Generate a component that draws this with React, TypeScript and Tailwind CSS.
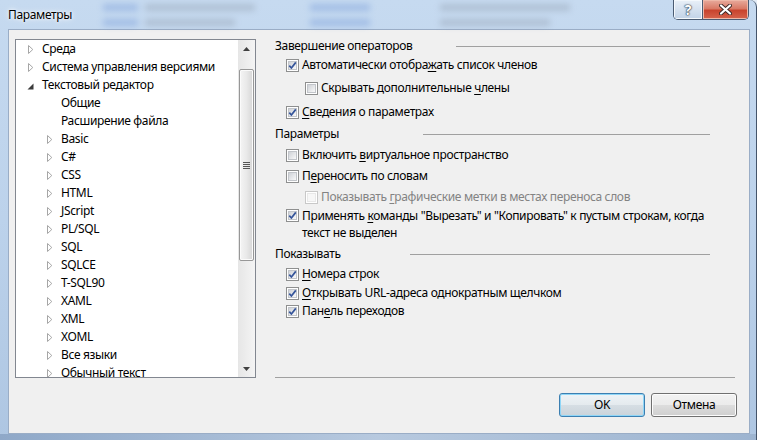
import React from 'react';

type Node = { label: string; level: 0 | 1; arrow?: 'closed' | 'open' };

const tree: Node[] = [
  { label: 'Среда', level: 0, arrow: 'closed' },
  { label: 'Система управления версиями', level: 0, arrow: 'closed' },
  { label: 'Текстовый редактор', level: 0, arrow: 'open' },
  { label: 'Общие', level: 1 },
  { label: 'Расширение файла', level: 1 },
  { label: 'Basic', level: 1, arrow: 'closed' },
  { label: 'C#', level: 1, arrow: 'closed' },
  { label: 'CSS', level: 1, arrow: 'closed' },
  { label: 'HTML', level: 1, arrow: 'closed' },
  { label: 'JScript', level: 1, arrow: 'closed' },
  { label: 'PL/SQL', level: 1, arrow: 'closed' },
  { label: 'SQL', level: 1, arrow: 'closed' },
  { label: 'SQLCE', level: 1, arrow: 'closed' },
  { label: 'T-SQL90', level: 1, arrow: 'closed' },
  { label: 'XAML', level: 1, arrow: 'closed' },
  { label: 'XML', level: 1, arrow: 'closed' },
  { label: 'XOML', level: 1, arrow: 'closed' },
  { label: 'Все языки', level: 1, arrow: 'closed' },
  { label: 'Обычный текст', level: 1, arrow: 'closed' },
];

function Arrow({ kind }: { kind?: 'closed' | 'open' }) {
  if (kind === 'closed') {
    return (
      <svg width="6" height="9" viewBox="0 0 6 9" className="ml-[1px]">
        <path d="M0.5 0.5 L4.8 4.5 L0.5 8.5 Z" fill="#fff" stroke="#a6a6a6" />
      </svg>
    );
  }
  if (kind === 'open') {
    return (
      <svg width="7" height="7" viewBox="0 0 7 7" className="mt-[2px]">
        <path d="M6.5 0.5 V6.5 H0.5 Z" fill="#3b3b3b" />
      </svg>
    );
  }
  return null;
}

function TreeRow({ node }: { node: Node }) {
  return (
    <div className={`flex h-[18px] shrink-0 items-center whitespace-nowrap ${node.level === 0 ? 'pl-[11px]' : 'pl-[30px]'}`}>
      <span className="flex w-[15px] items-center">
        <Arrow kind={node.arrow} />
      </span>
      <span>{node.label}</span>
    </div>
  );
}

function ScrollBar() {
  return (
    <div className="flex w-[17px] shrink-0 flex-col bg-linear-to-r from-[#e6e6e6] to-[#f4f4f4]">
      <div className="flex h-[17px] items-center justify-center">
        <svg width="7" height="4" viewBox="0 0 7 4">
          <path d="M3.5 0 L7 4 H0 Z" fill="#404040" />
        </svg>
      </div>
      <div className="mt-[12px] flex h-[192px] w-[15px] items-center justify-center self-center rounded-[2px] border border-[#979797] bg-linear-to-r from-[#f5f5f5] via-[#e9e9e9] to-[#d6d6d6] shadow-[inset_0_0_0_1px_#fbfbfb]">
        <div className="flex flex-col gap-[1px]">
          <div className="h-px w-[7px] bg-[#555]" />
          <div className="h-px w-[7px] bg-[#555]" />
          <div className="h-px w-[7px] bg-[#555]" />
          <div className="h-px w-[7px] bg-[#555]" />
        </div>
      </div>
      <div className="mt-auto flex h-[17px] items-center justify-center">
        <svg width="7" height="4" viewBox="0 0 7 4">
          <path d="M0 0 H7 L3.5 4 Z" fill="#404040" />
        </svg>
      </div>
    </div>
  );
}

function CheckBox({ checked, disabled }: { checked?: boolean; disabled?: boolean }) {
  return (
    <span
      className={`relative flex h-[13px] w-[13px] shrink-0 items-center justify-center border bg-white ${
        disabled ? 'border-[#c8c8c8]' : 'border-[#8e8f8f]'
      }`}
    >
      <span
        className={`h-[9px] w-[9px] border ${
          disabled
            ? 'border-[#e8e8e8] bg-[#f7f7f7]'
            : 'border-[#c2c5ca] bg-linear-to-br from-[#cfd2d7] to-[#f9f9f9]'
        }`}
      />
      {checked && (
        <svg className="absolute left-0 top-0" width="11" height="11" viewBox="0 0 11 11">
          <path d="M2.3 5.6 L4.4 8 L8.8 2.4" fill="none" stroke="#34549a" strokeWidth="1.7" />
        </svg>
      )}
    </span>
  );
}

function Header({ text, line, className = '' }: { text: string; line: string; className?: string }) {
  return (
    <div className={`flex h-[18px] w-[435px] items-center ${className}`}>
      <span>{text}</span>
      <div className={`ml-auto mt-[1px] h-px bg-[#a0a0a0] ${line}`} />
    </div>
  );
}

function Option({
  children,
  checked,
  disabled,
  indent,
  className = '',
}: {
  children: React.ReactNode;
  checked?: boolean;
  disabled?: boolean;
  indent?: boolean;
  className?: string;
}) {
  return (
    <div
      className={`flex h-[18px] items-center gap-[3px] whitespace-nowrap ${indent ? 'pl-[30px]' : 'pl-[11px]'} ${
        disabled ? 'text-[#838383]' : ''
      } ${className}`}
    >
      <CheckBox checked={checked} disabled={disabled} />
      <span>{children}</span>
    </div>
  );
}

function U({ children }: { children: React.ReactNode }) {
  return <span className="underline underline-offset-[2px]">{children}</span>;
}

function Button({ children, primary }: { children: React.ReactNode; primary?: boolean }) {
  return (
    <div
      className={`flex h-[24px] w-[86px] items-center justify-center rounded-[3px] border ${
        primary
          ? 'border-[#3c7fb1] bg-[linear-gradient(#eef3f6,#e4eaee_50%,#d6dee4_50%,#cad3da)] shadow-[inset_0_0_0_1px_#8fd6f7]'
          : 'border-[#707070] bg-[linear-gradient(#f2f2f2,#ebebeb_50%,#dddddd_50%,#cfcfcf)] shadow-[inset_0_0_0_1px_#fcfcfc]'
      }`}
    >
      {children}
    </div>
  );
}

export default function App() {
  return (
    <div className="h-[440px] w-[757px] overflow-hidden bg-[#e3ecf6] font-['Noto_Sans',sans-serif] text-[12px] leading-[18px] tracking-[-0.35px] text-black">
      <div className="flex h-full w-full flex-col rounded-tr-[7px] border-r border-[#44546a] bg-linear-to-b from-[#c6daf0] via-[#bcd2eb] to-[#aec6e2]">
        {/* title bar */}
        <div className="relative flex h-[29px] shrink-0 items-start">
          {/* blurred desktop showing through the glass */}
          <div className="pointer-events-none absolute left-0 top-0 h-[29px] w-[600px] opacity-40 blur-[3px]">
            <div className="absolute left-[103px] top-[4px] h-[7px] w-[35px] bg-[#6c93d6]" />
            <div className="absolute left-[145px] top-[4px] h-[7px] w-[110px] bg-[#8e9aab]" />
            <div className="absolute left-[103px] top-[19px] h-[7px] w-[35px] bg-[#6c93d6]" />
            <div className="absolute left-[145px] top-[19px] h-[7px] w-[90px] bg-[#8e9aab]" />
            <div className="absolute left-[310px] top-[4px] h-[7px] w-[60px] bg-[#6c93d6]" />
            <div className="absolute left-[440px] top-[4px] h-[7px] w-[130px] bg-[#8e9aab]" />
            <div className="absolute left-[310px] top-[19px] h-[7px] w-[60px] bg-[#6c93d6]" />
            <div className="absolute left-[440px] top-[19px] h-[7px] w-[110px] bg-[#8e9aab]" />
          </div>
          <div className="relative ml-[8px] mt-[6px] [text-shadow:0_0_6px_#fff,0_0_3px_#fff]">Параметры</div>
          <div className="relative ml-auto mr-[7px] flex h-[20px] overflow-hidden rounded-b-[5px] border border-t-0 border-[#4a5b72]">
            <div className="flex w-[28px] items-center justify-center bg-linear-to-b from-[#e9f0f8] via-[#d5e1ef] to-[#c2d3e7] shadow-[inset_0_0_0_1px_#f4f8fc]">
              <span className="text-[14px] font-bold leading-none text-white [text-shadow:0_0_1px_#2d3b4e,0_0_1px_#2d3b4e,0_0_2px_#2d3b4e]">?</span>
            </div>
            <div className="w-px bg-[#4a5b72]" />
            <div className="flex w-[45px] items-center justify-center bg-[linear-gradient(#e8ab9d,#d97a66_45%,#c8442e_55%,#d6644c)] shadow-[inset_0_0_0_1px_#eeb8a8]">
              <svg width="13" height="11" viewBox="0 0 13 11">
                <path d="M2 1.5 L11 9.5 M11 1.5 L2 9.5" stroke="#3d2a28" strokeWidth="4" strokeLinecap="round" />
                <path d="M2 1.5 L11 9.5 M11 1.5 L2 9.5" stroke="#fff" strokeWidth="2.2" strokeLinecap="round" />
              </svg>
            </div>
          </div>
        </div>

        {/* middle */}
        <div className="flex flex-1">
          <div className="w-[8px] shrink-0" />
          <div className="flex w-[742px] flex-col border border-[#9aadc6] bg-[#f0f0f0]">
            <div className="flex items-start">
              {/* tree */}
              <div className="ml-[6px] mt-[9px] flex h-[339px] w-[241px] border border-[#828790] bg-white">
                <div className="flex flex-1 flex-col overflow-hidden">
                  {tree.map((n) => (
                    <TreeRow key={n.label} node={n} />
                  ))}
                </div>
                <ScrollBar />
              </div>

              {/* options */}
              <div className="ml-[19px] flex h-[348px] w-[460px] flex-col pt-[7px]">
                <Header text="Завершение операторов" line="w-[254px]" />
                <Option checked className="mt-[1px]">
                  Автоматически отобра<U>ж</U>ать список членов
                </Option>
                <Option indent className="mt-[5px]">
                  Скрывать дополнительные <U>ч</U>лены
                </Option>
                <Option checked className="mt-[6px]">
                  <U>С</U>ведения о параметрах
                </Option>
                <Header text="Параметры" line="w-[287px]" className="mt-[4px]" />
                <Option className="mt-[3px]">
                  Включить <U>в</U>иртуальное пространство
                </Option>
                <Option className="mt-[3px]">
                  П<U>е</U>реносить по словам
                </Option>
                <Option indent disabled className="mt-[3px]">
                  Показывать <U>г</U>рафические метки в местах переноса слов
                </Option>
                <div className="mt-[1px] flex items-start gap-[3px] pl-[11px] leading-[17px]">
                  <span className="mt-[2px]">
                    <CheckBox checked />
                  </span>
                  <span>
                    Применять <U>к</U>оманды "Вырезать" и "Копировать" к пустым строкам, когда
                    <br />
                    текст не выделен
                  </span>
                </div>
                <Header text="Показывать" line="w-[300px]" className="mt-[4px]" />
                <Option checked className="mt-[2px]">
                  <U>Н</U>омера строк
                </Option>
                <Option checked className="mt-[1px]">
                  <U>О</U>ткрывать URL-адреса однократным щелчком
                </Option>
                <Option checked>
                  Пан<U>е</U>ль переходов
                </Option>
                <div className="mt-auto h-px w-[460px] bg-[#a0a0a0]" />
              </div>
            </div>

            <div className="mt-[15px] flex justify-end gap-[6px] pr-[12px]">
              <Button primary>OK</Button>
              <Button>Отмена</Button>
            </div>
          </div>
          <div className="w-[6px] shrink-0" />
        </div>

        <div className="h-[6px] shrink-0 bg-linear-to-r from-[#8fa8c8] via-[#b7c9df] to-[#9db4d0]" />
      </div>
    </div>
  );
}
